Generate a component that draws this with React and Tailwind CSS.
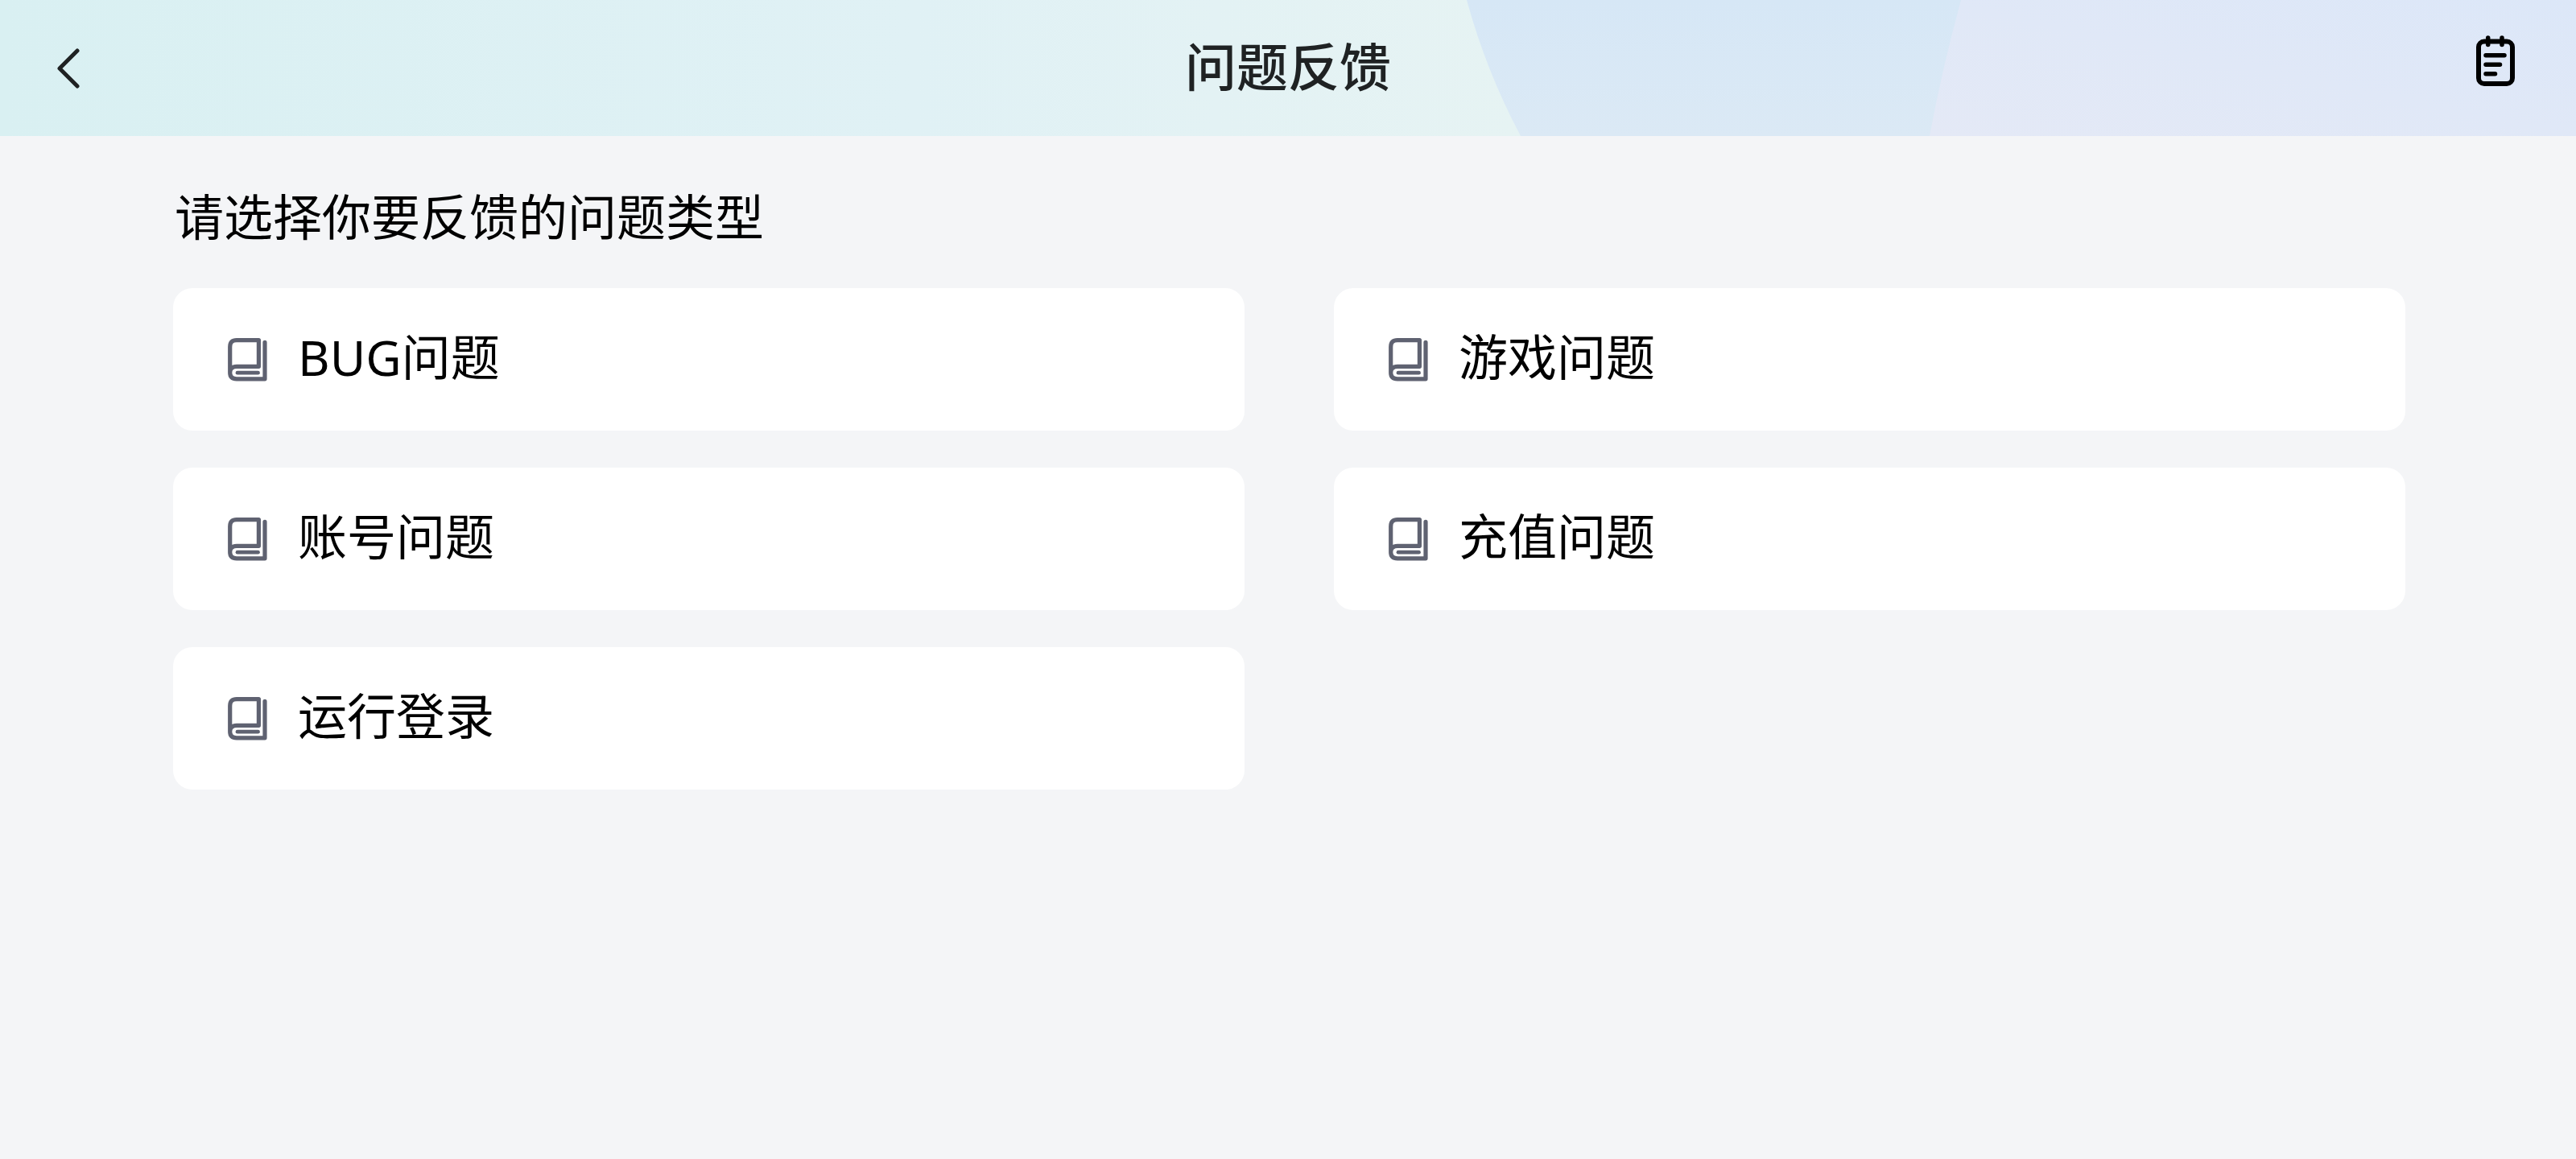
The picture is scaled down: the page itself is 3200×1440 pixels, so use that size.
import React from 'react';

const categories = [
  { id: 'bug', label: 'BUG问题' },
  { id: 'game', label: '游戏问题' },
  { id: 'account', label: '账号问题' },
  { id: 'recharge', label: '充值问题' },
  { id: 'login', label: '运行登录' },
];

const BackIcon = () => (
  <svg className="w-[30px] h-[50px]" viewBox="0 0 30 50" fill="none" stroke="currentColor" strokeWidth="5" strokeLinecap="round" strokeLinejoin="round" aria-hidden="true">
    <path d="M26 3 L4 25 L26 47" />
  </svg>
);

const RecordIcon = () => (
  <svg className="w-[48px] h-[64px]" viewBox="0 0 48 64" fill="none" stroke="currentColor" strokeWidth="6" strokeLinecap="round" aria-hidden="true">
    <rect x="3" y="7.5" width="42" height="52.5" rx="7" />
    <path d="M14.7 3v8.5M32 3v8.5" strokeWidth="5.5" />
    <path d="M12 24.7h23M12 36.3h17.5M12 47.7h11.5" strokeWidth="5.5" />
  </svg>
);

const BookIcon = () => (
  <svg className="w-[49px] h-[54px] shrink-0 text-[#5f6271]" viewBox="0 0 49 54" fill="none" stroke="currentColor" strokeWidth="5.2" strokeLinecap="round" strokeLinejoin="round" aria-hidden="true">
    <path d="M2.7 43V11Q2.7 2.6 11 2.6H38.4V35.3H11Q2.7 35.3 2.7 43Q2.7 50.8 11 50.8H46V5.4" />
    <path d="M12 43.2H37.5" strokeWidth="4.8" />
  </svg>
);

// Soft coloured panes behind the header bar
const HeaderBackground = () => (
  <svg className="absolute inset-0 w-full h-full" viewBox="0 0 3200 169" preserveAspectRatio="none" aria-hidden="true">
    <defs>
      <linearGradient id="mint" x1="0" y1="0" x2="1" y2="0">
        <stop offset="0" stopColor="#d9f0f2" />
        <stop offset="0.6" stopColor="#e0f1f5" />
        <stop offset="1" stopColor="#e6f3f3" />
      </linearGradient>
      <linearGradient id="sky" x1="0" y1="0" x2="0" y2="1">
        <stop offset="0" stopColor="#d6e7f6" />
        <stop offset="1" stopColor="#dbe9f5" />
      </linearGradient>
      <linearGradient id="lilac" x1="0" y1="1" x2="1" y2="0">
        <stop offset="0" stopColor="#e4e9f6" />
        <stop offset="0.5" stopColor="#e0e8f7" />
        <stop offset="1" stopColor="#dce7f8" />
      </linearGradient>
    </defs>
    <rect width="3200" height="169" fill="url(#sky)" />
    <path d="M0 0H1822Q1846 88 1889 169H0Z" fill="url(#mint)" />
    <path d="M2436 0H3200V169H2397Q2412 88 2436 0Z" fill="url(#lilac)" />
  </svg>
);

const CategoryCard = ({ label }) => (
  <button
    type="button"
    className="flex items-center gap-[38px] h-[177px] pl-[68px] pr-8 bg-white rounded-3xl text-left text-[61px] leading-[88px] text-black"
  >
    <BookIcon />
    <span className="pb-1.5">{label}</span>
  </button>
);

const App = () => {
  return (
    <div className="min-h-screen bg-[#f4f5f7] font-['Noto_Sans','Noto_Sans_CJK_SC',sans-serif]" lang="zh-CN">
      {/* Header */}
      <header className="relative h-[169px]">
        <HeaderBackground />
        <div className="relative h-full grid grid-cols-[1fr_auto_1fr] items-center px-[70px] text-[#1f2223]">
          <button type="button" aria-label="返回" className="justify-self-start">
            <BackIcon />
          </button>
          <h1 className="pb-1 text-[64px] leading-[96px] font-medium">问题反馈</h1>
          <button type="button" aria-label="反馈记录" className="justify-self-end self-start mt-11 mr-1.5 text-black">
            <RecordIcon />
          </button>
        </div>
      </header>

      {/* Category list */}
      <main className="pl-[215px] pr-[212px] pt-14">
        <h2 className="pl-0.5 text-[61px] leading-[90px] text-black">请选择你要反馈的问题类型</h2>
        <div className="mt-[43px] grid grid-cols-2 gap-x-[111px] gap-y-[46px]">
          {categories.map((item) => (
            <CategoryCard key={item.id} label={item.label} />
          ))}
        </div>
      </main>
    </div>
  );
};

export default App;
